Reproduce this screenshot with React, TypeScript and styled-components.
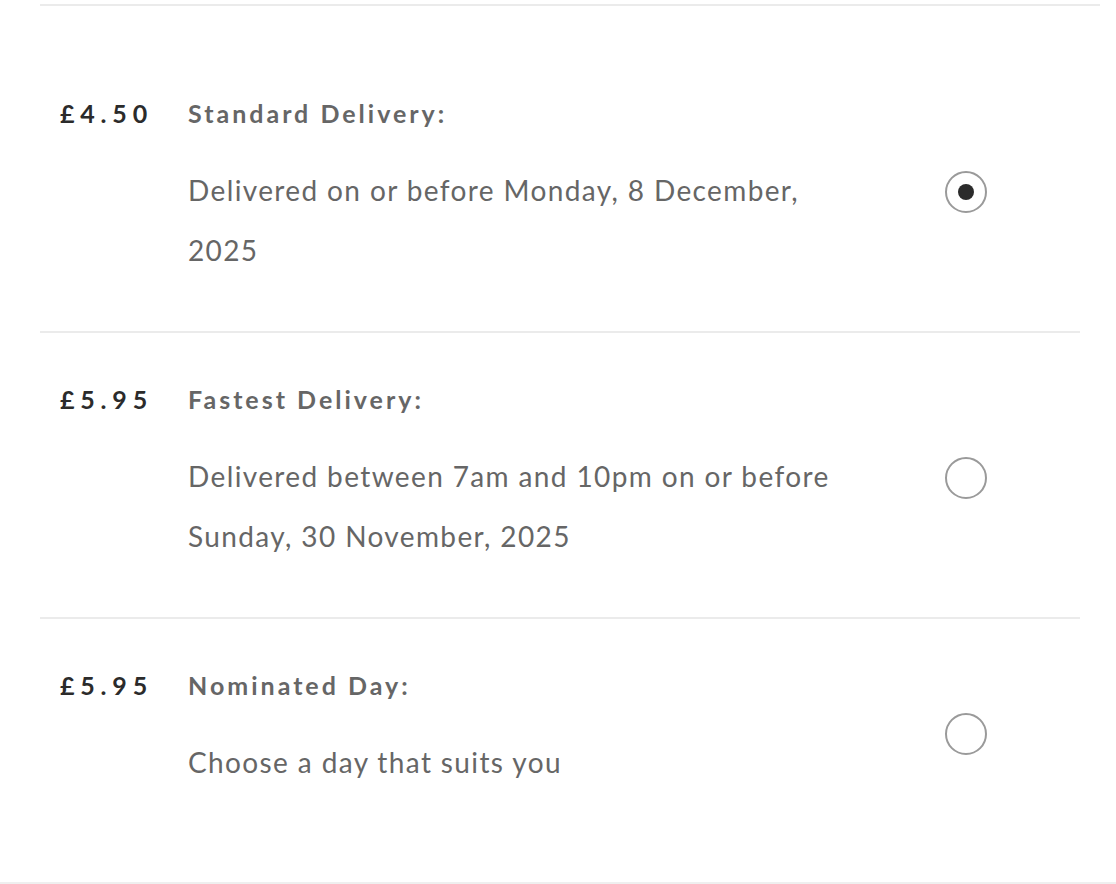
import React, { useState } from "react";
import styled, { createGlobalStyle } from "styled-components";

const GlobalStyle = createGlobalStyle`
  html, body {
    margin: 0;
    padding: 0;
    background: #ffffff;
  }
  body {
    font-family: Futura, Lato, "Liberation Sans", sans-serif;
  }
`;

const Page = styled.div`
  width: 1116px;
  min-height: 884px;
  box-sizing: border-box;
  padding-top: 4px;
  display: flex;
  flex-direction: column;
`;

const TopRule = styled.div`
  height: 2px;
  margin: 0 16px 0 40px;
  background: #ebebeb;
`;

const List = styled.div`
  padding: 41px 36px 39px 40px;
  border-bottom: 2px solid #efefef;
  display: flex;
  flex-direction: column;
`;

const Row = styled.label<{ $first?: boolean }>`
  display: flex;
  align-items: flex-start;
  padding: 48px 93px 51px 20px;
  border-top: ${(p) => (p.$first ? "none" : "2px solid #ebebeb")};
  margin-top: ${(p) => (p.$first ? "-41px" : "0")};
  padding-top: ${(p) => (p.$first ? "89px" : "48px")};
  cursor: pointer;
`;

const Price = styled.div`
  width: 128px;
  flex: none;
  font-size: 25px;
  line-height: 36px;
  font-weight: 700;
  letter-spacing: 5.8px;
  color: #2b2b2b;
`;

const Body = styled.div`
  flex: 1;
  min-width: 0;
  display: flex;
  align-items: center;
  gap: 90px;
`;

const Text = styled.div`
  flex: 1;
  min-width: 0;
  display: flex;
  flex-direction: column;
  gap: 29px;
`;

const Title = styled.div`
  font-size: 25px;
  line-height: 36px;
  font-weight: 700;
  letter-spacing: 3px;
  color: #666666;
`;

const Description = styled.div`
  font-size: 28px;
  line-height: 60px;
  font-weight: 400;
  letter-spacing: 1.38px;
  color: #666666;
`;

const Radio = styled.input`
  appearance: none;
  -webkit-appearance: none;
  flex: none;
  width: 42px;
  height: 42px;
  margin: 8px 0 0 0;
  border-radius: 50%;
  border: 2px solid #9a9a9a;
  background: #ffffff;
  display: grid;
  place-items: center;
  cursor: pointer;
  box-sizing: border-box;

  &::after {
    content: "";
    width: 16px;
    height: 16px;
    border-radius: 50%;
    background: #2b2b2b;
    transform: scale(0);
  }

  &:checked::after {
    transform: scale(1);
  }
`;

type Option = {
  id: string;
  price: string;
  title: string;
  description: string;
};

const options: Option[] = [
  {
    id: "standard",
    price: "£4.50",
    title: "Standard Delivery:",
    description: "Delivered on or before Monday, 8 December, 2025",
  },
  {
    id: "fastest",
    price: "£5.95",
    title: "Fastest Delivery:",
    description:
      "Delivered between 7am and 10pm on or before Sunday, 30 November, 2025",
  },
  {
    id: "nominated",
    price: "£5.95",
    title: "Nominated Day:",
    description: "Choose a day that suits you",
  },
];

export default function App() {
  const [selected, setSelected] = useState("standard");
  return (
    <>
      <GlobalStyle />
      <Page>
        <TopRule />
        <List>
          {options.map((o, i) => (
            <Row key={o.id} $first={i === 0}>
              <Price>{o.price}</Price>
              <Body>
                <Text>
                  <Title>{o.title}</Title>
                  <Description>{o.description}</Description>
                </Text>
                <Radio
                  type="radio"
                  name="delivery"
                  checked={selected === o.id}
                  onChange={() => setSelected(o.id)}
                />
              </Body>
            </Row>
          ))}
        </List>
      </Page>
    </>
  );
}
